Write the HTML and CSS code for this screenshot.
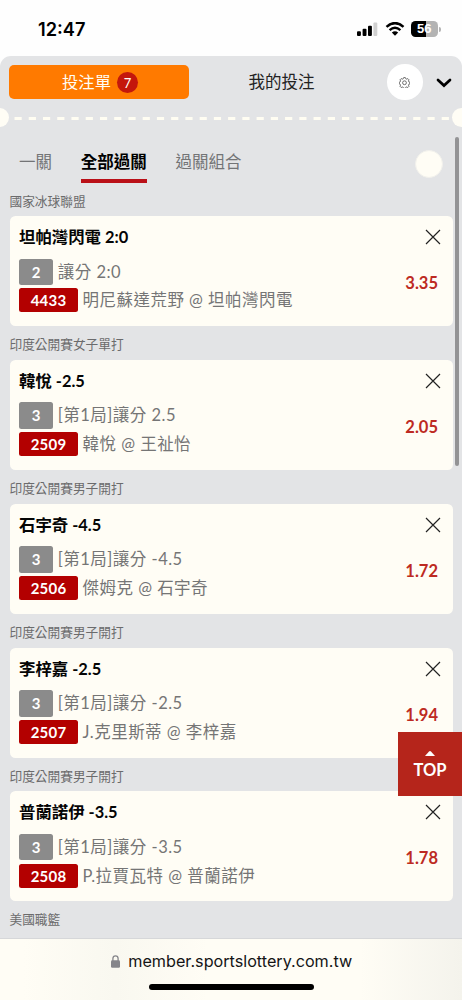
FILE: index.html
```html
<!DOCTYPE html>
<html lang="zh-Hant">
<head>
<meta charset="utf-8">
<meta name="viewport" content="width=device-width, initial-scale=1">
<title>投注單</title>
<link rel="stylesheet" href="styles.css">
</head>
<body>
<div class="phone">
  <header class="status">
    <span class="clock">12:47</span>
    <div class="indicators">
      <svg class="signal" width="21" height="14" viewBox="0 0 21 14"><rect x="0" y="9.3" width="3.9" height="4.7" rx="1"/><rect x="5.6" y="6.8" width="3.9" height="7.2" rx="1"/><rect x="11" y="3.7" width="3.9" height="10.3" rx="1"/><rect class="dim" x="16.4" y="0.6" width="3.9" height="13.4" rx="1"/></svg>
      <svg class="wifi" width="20" height="14" viewBox="0 0 20 14"><path d="M1.5 4.9Q10-2.7 18.5 4.9"/><path d="M4.6 8.1Q10 3.5 15.4 8.1"/><path class="solid" d="M10 13.8L6.8 10.6Q10 7.9 13.2 10.6Z"/></svg>
      <div class="battery"><span>56</span></div>
      <i class="battery-tip"></i>
    </div>
  </header>

  <main class="sheet">
    <nav class="top-nav">
      <button class="slip-tab">投注單<span class="count">7</span></button>
      <span class="mine">我的投注</span>
      <span class="gear"><svg width="11" height="11" viewBox="0 0 22 22"><path d="M9.300 1.200h3.400l.8 2.300 1.900.8 2.200-1.100 2.400 2.400-1.100 2.200.8 1.900 2.100.8v3.200l-2.100.8-.8 1.900 1.100 2.200-2.400 2.400-2.200-1.100-1.900.8-.8 2.100H9.300l-.8-2.100-1.900-.8-2.200 1.100L2 18.600l1.100-2.200-.8-1.900-1.700-.8v-3.200l1.700-.8.8-1.900L2 5.600l2.400-2.400 2.200 1.100 1.900-.8z"/><circle cx="11" cy="11.500" r="3.800"/></svg></span>
      <svg class="chevron" width="16" height="10" viewBox="0 0 16 10"><path d="M2 2L8 7.600 14 2"/></svg>
    </nav>
    <div class="tear">
      <i class="notch"></i>
      <svg class="dashes" width="436" height="3" viewBox="0 0 436 3"><path d="M1.500 1.500H436"/></svg>
      <i class="notch"></i>
    </div>
    <nav class="modes">
      <span class="mode">一關</span>
      <span class="mode active">全部過關</span>
      <span class="mode">過關組合</span>
      <i class="dot"></i>
    </nav>

    <section class="bet">
      <h2>國家冰球聯盟</h2>
      <article class="card">
        <div class="title">坦帕灣閃電 2:0</div>
        <svg class="close" viewBox="0 0 16 16"><path d="M1 1L15 15M15 1L1 15"/></svg>
        <div class="line"><b class="num">2</b><span>讓分 2:0</span></div>
        <div class="line"><b class="code">4433</b><span>明尼蘇達荒野 @ 坦帕灣閃電</span></div>
        <strong class="odds">3.35</strong>
      </article>
    </section>
    <section class="bet">
      <h2>印度公開賽女子單打</h2>
      <article class="card">
        <div class="title">韓悅 -2.5</div>
        <svg class="close" viewBox="0 0 16 16"><path d="M1 1L15 15M15 1L1 15"/></svg>
        <div class="line"><b class="num">3</b><span>[第1局]讓分 2.5</span></div>
        <div class="line"><b class="code">2509</b><span>韓悅 @ 王祉怡</span></div>
        <strong class="odds">2.05</strong>
      </article>
    </section>
    <section class="bet">
      <h2>印度公開賽男子開打</h2>
      <article class="card">
        <div class="title">石宇奇 -4.5</div>
        <svg class="close" viewBox="0 0 16 16"><path d="M1 1L15 15M15 1L1 15"/></svg>
        <div class="line"><b class="num">3</b><span>[第1局]讓分 -4.5</span></div>
        <div class="line"><b class="code">2506</b><span>傑姆克 @ 石宇奇</span></div>
        <strong class="odds">1.72</strong>
      </article>
    </section>
    <section class="bet">
      <h2>印度公開賽男子開打</h2>
      <article class="card">
        <div class="title">李梓嘉 -2.5</div>
        <svg class="close" viewBox="0 0 16 16"><path d="M1 1L15 15M15 1L1 15"/></svg>
        <div class="line"><b class="num">3</b><span>[第1局]讓分 -2.5</span></div>
        <div class="line"><b class="code">2507</b><span>J.克里斯蒂 @ 李梓嘉</span></div>
        <strong class="odds">1.94</strong>
      </article>
    </section>
    <section class="bet">
      <h2>印度公開賽男子開打</h2>
      <article class="card">
        <div class="title">普蘭諾伊 -3.5</div>
        <svg class="close" viewBox="0 0 16 16"><path d="M1 1L15 15M15 1L1 15"/></svg>
        <div class="line"><b class="num">3</b><span>[第1局]讓分 -3.5</span></div>
        <div class="line"><b class="code">2508</b><span>P.拉賈瓦特 @ 普蘭諾伊</span></div>
        <strong class="odds">1.78</strong>
      </article>
    </section>
    <section class="bet"><h2>美國職籃</h2></section>
  </main>

  <footer class="browser">
    <div class="address">
      <svg width="9" height="13" viewBox="0 0 9 13"><rect x="0" y="5.300" width="9" height="7.500" rx="1.300"/><path d="M1.900 6V3.500a2.600 2.700 0 0 1 5.200 0V6"/></svg>
      <span>member.sportslottery.com.tw</span>
    </div>
    <i class="home"></i>
  </footer>

  <i class="scrollbar"></i>
  <a class="to-top"><svg width="10" height="5" viewBox="0 0 10 5"><path d="M0 5L4 .6Q5-.4 6 .6L10 5Z"/></svg><span>TOP</span></a>
</div>
</body>
</html>
```
FILE: styles.css
```css
* { box-sizing: border-box; }
body { margin: 0; background: #fefefe; font-family: Lato, "Noto Sans CJK TC", sans-serif; }
.phone { position: relative; width: 462px; height: 1000px; overflow: hidden; display: flex; flex-direction: column; }
svg { display: block; }

.status { height: 56px; flex: none; display: flex; justify-content: space-between; padding: 19px 21.500px 0 38px; }
.clock { font: 600 18.200px/20px Inter, sans-serif; color: #000; }
.indicators { display: flex; align-items: center; height: 20px; }
.signal .dim { fill: #d0d0d0; }
.wifi { margin: 0 6px 0 6.500px; fill: none; stroke: #000; stroke-width: 2.500; }
.wifi .solid { fill: #000; stroke: none; }
.battery { width: 27.500px; height: 15.500px; border-radius: 4.500px; background: linear-gradient(90deg, #000 56%, #b3b3b3 56%); color: #fff; font: 700 13px/16px "Liberation Sans", sans-serif; text-align: center; }
.battery-tip { width: 1.500px; height: 5px; margin-left: 1px; border-radius: 0 2px 2px 0; background: #b3b3b3; }

.sheet { flex: none; height: 882px; overflow: hidden; background: #e3e4e6; border-radius: 11px 11px 0 0; }
.top-nav { display: flex; align-items: center; height: 52px; padding: 0 10px 0 9px; }
.slip-tab { width: 180px; height: 34px; border: 0; border-radius: 5px; background: #ff7a00; color: #fffdf5; display: flex; align-items: center; justify-content: center; gap: 6px; padding: 0 0 0 2px; font: 400 16.300px/24px Lato, "Noto Sans CJK TC", sans-serif; }
.count { width: 21px; height: 21px; border-radius: 50%; background: #c4170c; font: 400 13px/22px Lato, sans-serif; text-align: center; }
.mine { width: 67px; margin-left: 59.500px; font-size: 16.500px; line-height: 24px; color: #222; white-space: nowrap; }
.gear { width: 35.500px; height: 35.500px; margin-left: 71.500px; border-radius: 50%; background: #fff; display: flex; align-items: center; justify-content: center; }
.gear svg { fill: none; stroke: #555; stroke-width: 1.700; }
.chevron { margin: 1px 0 0 13px; fill: none; stroke: #000; stroke-width: 2.700; stroke-linecap: round; }

.tear { display: flex; align-items: center; justify-content: space-between; height: 19px; margin: 0 -9px 0 -10px; }
.notch { width: 19px; height: 19px; border-radius: 50%; background: #fffdf5; }
.dashes { margin-top: 2px; flex: none; }
.dashes path { stroke: #fffdf2; stroke-width: 3; stroke-dasharray: 7.200 7.040; }

.modes { display: flex; height: 57.500px; margin-top: 7px; padding: 16px 19px 0; gap: 28.800px; font-size: 16.500px; line-height: 25px; color: #737476; }
.mode { height: 32.500px; white-space: nowrap; }
.active { font-weight: 700; color: #000; border-bottom: 4px solid #ba1018; }
.dot { width: 28px; height: 28px; margin: 0 0 0 auto; border-radius: 50%; background: #fffdf5; border: 1px solid #f2f1ec; }

.bet { margin: 0 9.500px 9px; }
.bet h2 { margin: 0; height: 24.700px; font-size: 12.700px; font-weight: 400; line-height: 19.500px; color: #6b6b6c; }
.card { display: grid; grid-template-columns: 1fr 48px; grid-template-rows: 41px 29.500px 27.500px; height: 110.100px; padding: 0 10px 0 9.500px; border-radius: 5.500px; background: #fffdf5; }
.title { font-size: 16.400px; line-height: 42px; font-weight: 700; color: #050505; white-space: nowrap; }
.close { grid-column: 2; width: 16px; height: 16px; justify-self: end; margin: 13px 2px 0 0; fill: none; stroke: #222; stroke-width: 1.200; }
.line { grid-column: 1; display: flex; align-items: center; font-size: 16.500px; letter-spacing: .48px; color: #757575; white-space: nowrap; }
.line span { line-height: 24px; }
.line b { color: #fff; font-size: 15px; text-align: center; border-radius: 2.500px; letter-spacing: .2px; }
.num { width: 34.300px; height: 26.500px; line-height: 26.500px; background: #8b8b8b; margin-right: 4.500px; }
.num + span { margin-top: -.8px; }
.code { width: 59px; height: 24px; line-height: 24.500px; background: #b30000; margin-right: 4.500px; }
.odds { grid-column: 2; grid-row: 2 / 4; justify-self: end; font-size: 16.500px; line-height: 24px; margin: 14px 4.500px 0 0; color: #bd2a22; }

.browser { flex: 1; border-top: 1px solid #d6d7d9; background: linear-gradient(90deg, #fffdf5 5%, #f9f8f0 25%, #fffdf5 45%, #fffdf5 78%, #f4f3ec); display: flex; flex-direction: column; align-items: center; }
.address { display: flex; align-items: center; gap: 8px; height: 22px; margin: 11px 0 0 1.500px; color: #151515; font: 400 16.180px/22px Inter, sans-serif; }
.address svg { fill: #85858a; }
.address path { fill: none; stroke: #85858a; stroke-width: 1.300; }
.home { width: 165px; height: 6px; margin-top: 12px; border-radius: 3px; background: #000; }

.scrollbar { position: absolute; left: 454.500px; top: 137px; width: 4px; height: 329px; border-radius: 2px; background: #939395; }
.to-top { position: absolute; right: 0; top: 732px; width: 64px; height: 64px; background: #b5251b; color: #fff; display: flex; flex-direction: column; align-items: center; padding-top: 19px; font-size: 16.500px; line-height: 22px; font-weight: 700; }
.to-top svg { fill: #fff; margin-bottom: 3px; }
```
